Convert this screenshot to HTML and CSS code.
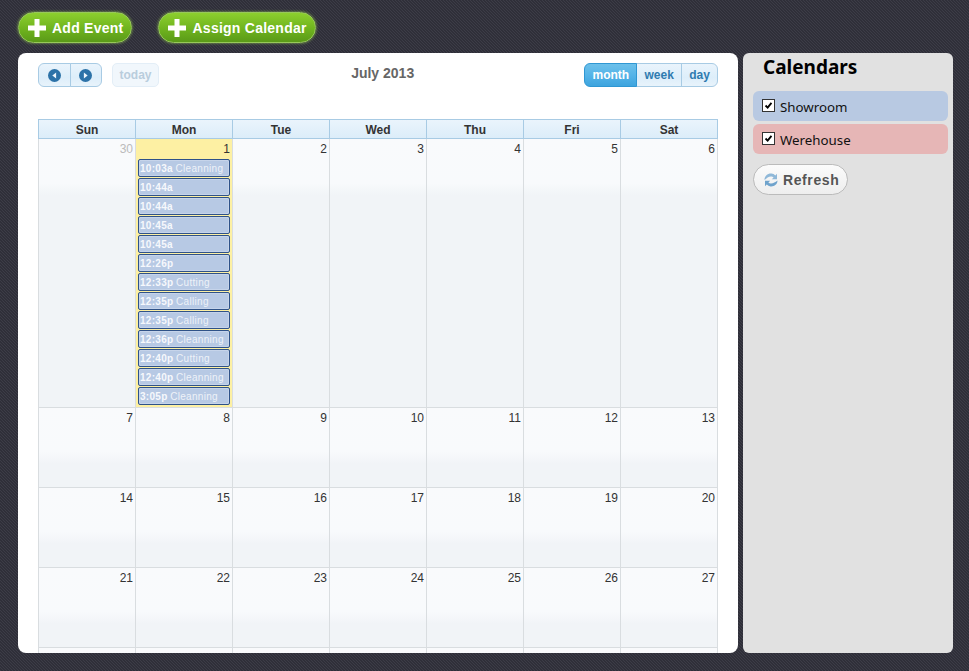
FILE: index.html
```html
<!DOCTYPE html>
<html lang="en">
<head>
<meta charset="utf-8">
<title>Calendar</title>
<link rel="stylesheet" href="styles.css">
</head>
<body>
<div class="topbar">
  <a class="add-btn"><svg class="plus" viewBox="0 0 18 18"><path d="M6.500 0h5v6.500h6.500v5h-6.500v6.500h-5v-6.500h-6.500v-5h6.500z"/></svg>Add Event</a>
  <a class="add-btn"><svg class="plus" viewBox="0 0 18 18"><path d="M6.500 0h5v6.500h6.500v5h-6.500v6.500h-5v-6.500h-6.500v-5h6.500z"/></svg>Assign Calendar</a>
</div>
<div class="main">
  <section class="panel">
    <div class="toolbar">
      <div class="tb-left">
        <div class="btn-group">
          <span class="tb-btn icon-btn"><svg class="nav" viewBox="0 0 12 12"><circle cx="6" cy="6" r="6"/><path class="tri" d="M7.500 3.200v5.600l-3.500-2.800z"/></svg></span>
          <span class="tb-btn icon-btn"><svg class="nav" viewBox="0 0 12 12"><circle cx="6" cy="6" r="6"/><path class="tri" d="M4.500 3.200v5.600l3.500-2.800z"/></svg></span>
        </div>
        <span class="tb-btn today">today</span>
      </div>
      <h2 class="title">July 2013</h2>
      <div class="btn-group">
        <span class="tb-btn view active">month</span>
        <span class="tb-btn view">week</span>
        <span class="tb-btn view">day</span>
      </div>
    </div>
    <div class="cal">
      <div class="dow">Sun</div><div class="dow">Mon</div><div class="dow">Tue</div><div class="dow">Wed</div><div class="dow">Thu</div><div class="dow">Fri</div><div class="dow">Sat</div>

      <div class="day other"><span class="num">30</span></div>
      <div class="day today-cell"><span class="num">1</span>
        <div class="events">
          <div class="event"><b>10:03a</b> Cleanning</div>
          <div class="event"><b>10:44a</b></div>
          <div class="event"><b>10:44a</b></div>
          <div class="event"><b>10:45a</b></div>
          <div class="event"><b>10:45a</b></div>
          <div class="event"><b>12:26p</b></div>
          <div class="event"><b>12:33p</b> Cutting</div>
          <div class="event"><b>12:35p</b> Calling</div>
          <div class="event"><b>12:35p</b> Calling</div>
          <div class="event"><b>12:36p</b> Cleanning</div>
          <div class="event"><b>12:40p</b> Cutting</div>
          <div class="event"><b>12:40p</b> Cleanning</div>
          <div class="event"><b>3:05p</b> Cleanning</div>
        </div>
      </div>
      <div class="day"><span class="num">2</span></div>
      <div class="day"><span class="num">3</span></div>
      <div class="day"><span class="num">4</span></div>
      <div class="day"><span class="num">5</span></div>
      <div class="day"><span class="num">6</span></div>

      <div class="day"><span class="num">7</span></div>
      <div class="day"><span class="num">8</span></div>
      <div class="day"><span class="num">9</span></div>
      <div class="day"><span class="num">10</span></div>
      <div class="day"><span class="num">11</span></div>
      <div class="day"><span class="num">12</span></div>
      <div class="day"><span class="num">13</span></div>

      <div class="day"><span class="num">14</span></div>
      <div class="day"><span class="num">15</span></div>
      <div class="day"><span class="num">16</span></div>
      <div class="day"><span class="num">17</span></div>
      <div class="day"><span class="num">18</span></div>
      <div class="day"><span class="num">19</span></div>
      <div class="day"><span class="num">20</span></div>

      <div class="day"><span class="num">21</span></div>
      <div class="day"><span class="num">22</span></div>
      <div class="day"><span class="num">23</span></div>
      <div class="day"><span class="num">24</span></div>
      <div class="day"><span class="num">25</span></div>
      <div class="day"><span class="num">26</span></div>
      <div class="day"><span class="num">27</span></div>

      <div class="day"></div><div class="day"></div><div class="day"></div><div class="day"></div><div class="day"></div><div class="day"></div><div class="day"></div>
    </div>
  </section>
  <aside class="side">
    <h1 class="side-title">Calendars</h1>
    <div class="cal-item blue"><span class="check"><svg viewBox="0 0 13 13"><path d="M3 6.500l2.500 2.500 4.500-5.500" /></svg></span>Showroom</div>
    <div class="cal-item red"><span class="check"><svg viewBox="0 0 13 13"><path d="M3 6.500l2.500 2.500 4.500-5.500" /></svg></span>Werehouse</div>
    <a class="refresh"><svg class="refresh-icon" viewBox="0 0 16 16"><path class="r1" d="M1.500 8C1.500 4 5 1.200 8.500 1.600c1.500.2 2.800.8 3.800 1.800L14 1.800v5.400H8.800l1.800-1.800C9.800 4.700 8.900 4.400 8 4.500 5.500 4.700 3.800 6 1.500 8z"/><path class="r2" d="M14.500 8.500c0 3.700-3.500 6.300-7 5.900-1.500-.2-2.800-.8-3.800-1.800L2 14.200V8.800h5.200l-1.800 1.800c.8.700 1.700 1 2.600.9 2.500-.2 4.200-1.300 6.500-3z"/></svg>Refresh</a>
  </aside>
</div>
</body>
</html>
```
FILE: styles.css
```css
* { box-sizing: border-box; }
html, body { height: 100%; margin: 0; overflow: hidden; }
body {
  font-family: "Liberation Sans", Arial, sans-serif;
  background-color: #383843;
  background-image: linear-gradient(45deg, #2f2f39 25%, #3c3c47 25%, #3c3c47 50%, #2f2f39 50%, #2f2f39 75%, #3c3c47 75%);
  background-size: 3px 3px;
  padding: 12px 16px 18px 18px;
  display: flex;
  flex-direction: column;
}
.topbar { display: flex; gap: 26px; height: 41px; flex: none; }
.add-btn {
  display: flex; align-items: center; gap: 6px;
  height: 31px; padding: 0 8px 0 9px;
  border-radius: 16px;
  border: 1px solid #98c95a;
  background: linear-gradient(#8ccf2e, #6fb31e 55%, #5a9a18);
  box-shadow: 0 0 3px #8dbb52;
  color: #fff; font-weight: bold; font-size: 14px; letter-spacing: .25px;
}
.plus { width: 18px; height: 18px; fill: #fff; }
.main { display: flex; gap: 5px; flex: 1; min-height: 0; }
.panel {
  width: 720px; background: #fff; border-radius: 8px;
  padding: 10px 20px 0; overflow: hidden;
}
.toolbar { display: flex; justify-content: space-between; align-items: flex-start; height: 56px; }
.tb-left { display: flex; gap: 10px; }
.btn-group { display: flex; }
.tb-btn {
  height: 24px; display: flex; align-items: center; justify-content: center;
  border: 1px solid #a8cbe4; font-size: 12px; font-weight: bold; color: #2f7bb0;
  background: linear-gradient(#eaf4fc, #ddeefa 60%, #e8f3fb);
}
.btn-group .tb-btn + .tb-btn { margin-left: -1px; }
.btn-group .tb-btn:first-child { border-radius: 6px 0 0 6px; }
.btn-group .tb-btn:last-child { border-radius: 0 6px 6px 0; }
.icon-btn { width: 32.500px; }
.nav { width: 13px; height: 13px; fill: #2c72a8; }
.nav .tri { fill: #eef6fc; }
.today { width: 47px; border-radius: 5px; color: #b9cddd; border-color: #e3eef7; background: #f1f7fc; }
.title { margin: 2px 0 0 22px; font-size: 14px; font-weight: bold; color: #666; }
.view { padding: 0 7.170px; }
.view.active { background: linear-gradient(#6cc0ea, #55b4e8 50%, #3ea4de); color: #fff; border-color: #2f97d3; position: relative; }
.cal {
  display: grid;
  width: 680px;
  grid-template-columns: repeat(7, 97px);
  grid-template-rows: 20px 269px 80px 80px 80px 80px;
  border-left: 1px solid #d9dde0;
}
.dow {
  border: 1px solid #a8cbe4; border-left: 0;
  background: linear-gradient(#eaf4fc, #dcedf9);
  text-align: center; font-size: 12px; font-weight: bold; color: #333; line-height: 20px;
}
.dow:first-child { box-shadow: -1px 0 0 #a8cbe4; }
.day {
  border-right: 1px solid #d9dde0; border-bottom: 1px solid #d9dde0;
  background: linear-gradient(#f9fafc 0, #f8fafc 44px, #f1f4f7 56px, #f1f4f7 100%);
  padding: 3px 2px 0 2px;
  text-align: right; font-size: 12px; color: #333; min-width: 0;
}
.num { display: block; line-height: 15px; height: 17px; }
.other .num { color: #bbb; }
.today-cell { background: #fdf0a3; }
.events { display: flex; flex-direction: column; gap: 1px; }
.event {
  height: 18px; border: 1px solid #2f5288; border-radius: 2px;
  background: #b7c9e4; box-shadow: inset 0 0 0 1px #c6d4ea;
  color: #eef2f8; font-size: 10px; line-height: 17px; letter-spacing: .3px; word-spacing: -.5px;
  text-align: left; padding-left: 1px; white-space: nowrap; overflow: hidden;
}
.event b { color: #f6f8fc; }
.side {
  width: 210px; background: #e1e1e1; border-radius: 6px; padding: 0 5px 0 10px;
  font-family: "Noto Sans", Tahoma, sans-serif;
}
.side-title { margin: 0 0 9px 10px; font-size: 19px; line-height: 29px; color: #000; font-weight: bold; }
.cal-item {
  display: flex; align-items: center; gap: 5px; height: 30px; margin-bottom: 3px;
  border-radius: 6px; padding: 1px 0 0 9px; font-size: 13.300px; color: #111;
}
.blue { background: #b8c9e2; }
.red { background: #e6b6b6; }
.check { width: 13px; height: 13px; border: 1px solid #333; background: #fff; display: block; margin-top: -2px; }
.check svg { display: block; width: 11px; height: 11px; fill: none; stroke: #000; stroke-width: 2.200; }
.refresh {
  display: inline-flex; align-items: center; gap: 4px; height: 31px; width: 95px; margin-top: 7px;
  padding: 1px 0 0 9px; border-radius: 16px; border: 1px solid #bbb;
  background: linear-gradient(#fbfbfb, #eee);
  font-family: "Liberation Sans", Arial, sans-serif; font-size: 14px; font-weight: bold; color: #555; letter-spacing: .6px;
}
.refresh-icon { width: 16px; height: 16px; }
.r1 { fill: #8fb8d8; }
.r2 { fill: #6fa3cc; }
```
